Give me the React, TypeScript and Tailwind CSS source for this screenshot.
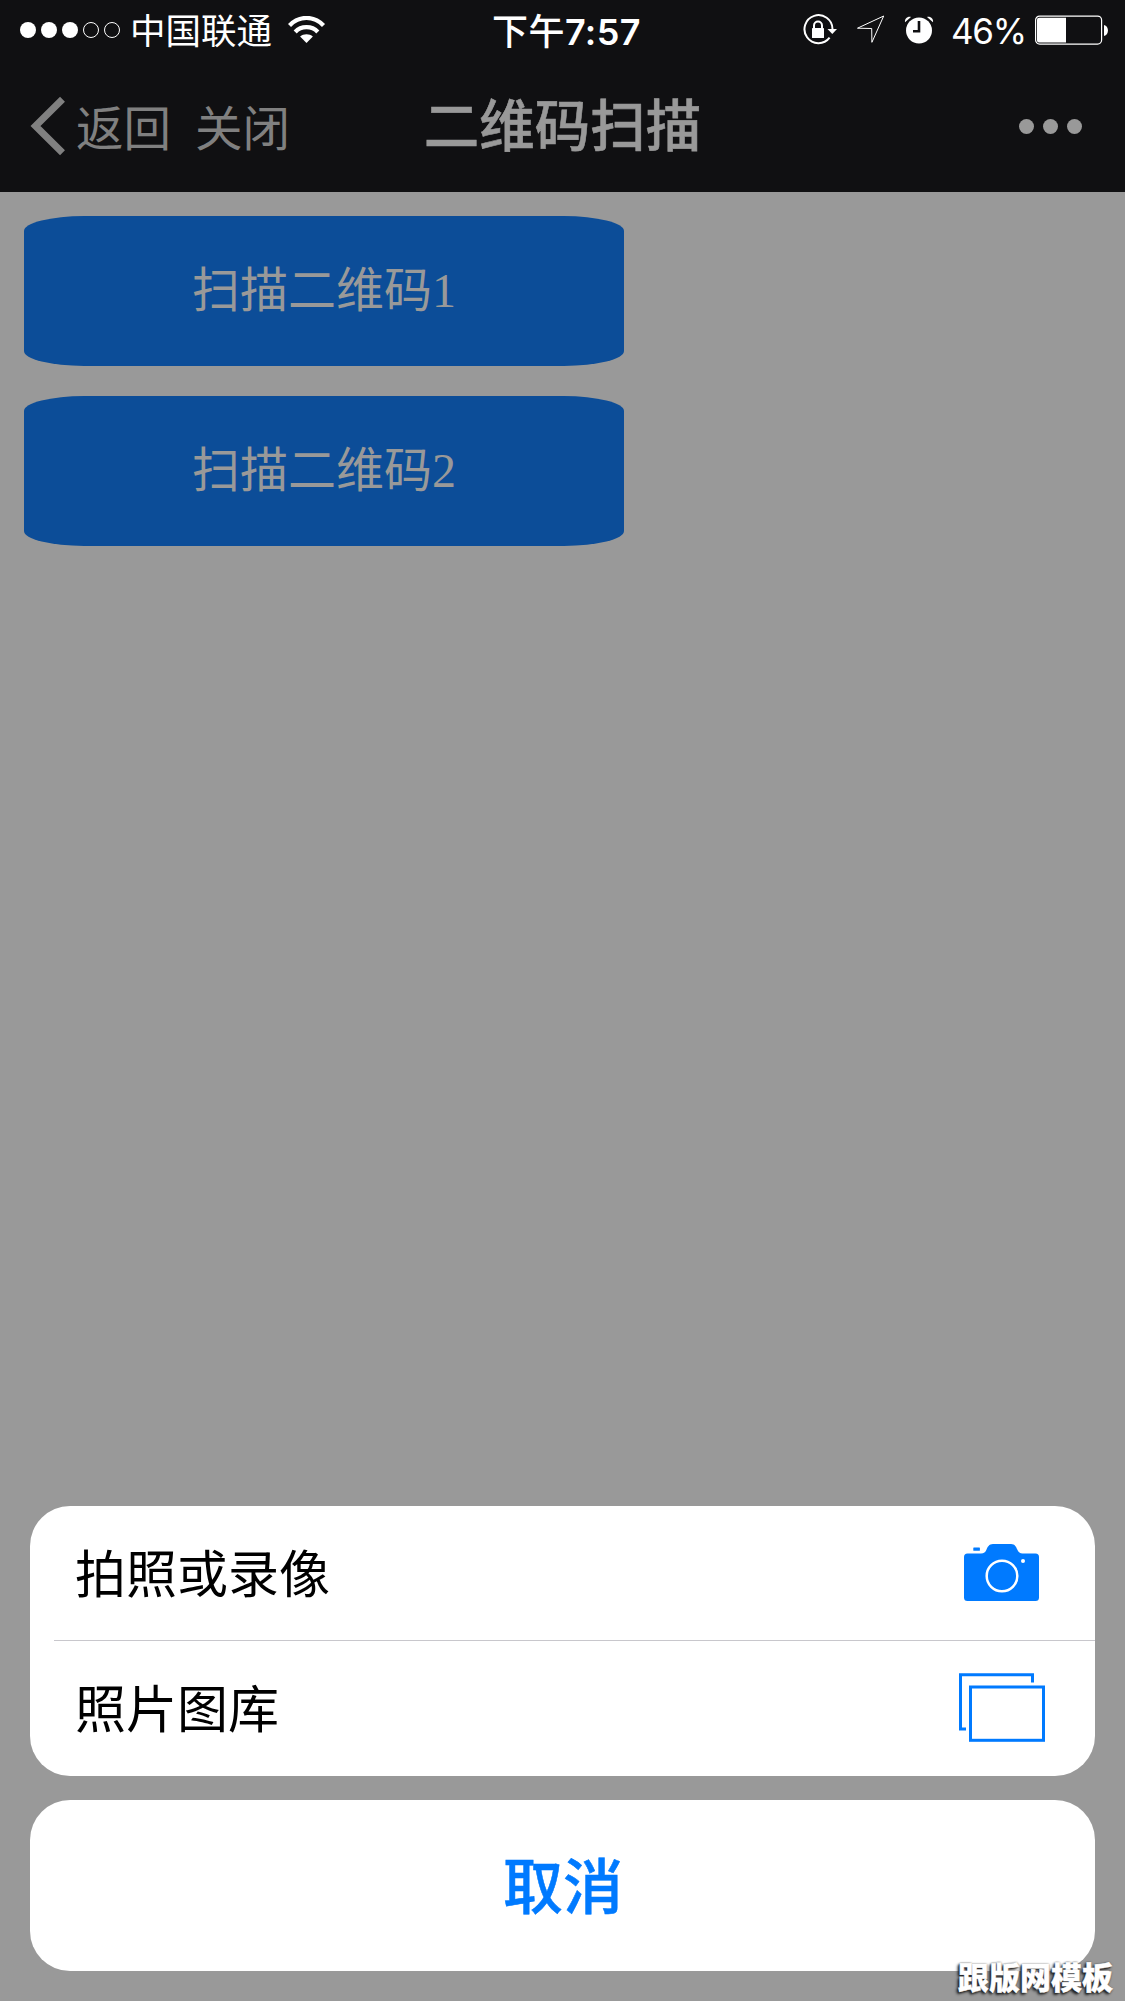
import React from 'react';
import { twMerge } from 'tailwind-merge';

const SANS = "font-['Inter','Noto_Sans_CJK_SC',sans-serif]";
const CJK = "font-['Noto_Sans_CJK_SC',sans-serif]";

const SIGNAL = [true, true, true, false, false];

const WifiIcon = () => (
  <svg className="ml-[16px] h-[28px] w-[38px] shrink-0" viewBox="0 0 38 28" fill="none">
    <path d="M1.500 9.5C11 -0.6 26 -0.6 35.500 9.500" stroke="#fff" strokeWidth="4.200" />
    <path d="M7.200 16C13.100 9.600 23.900 9.600 29.800 16" stroke="#fff" strokeWidth="4.200" />
    <path d="M18.500 27L12.100 20.500C15.500 17.400 21.500 17.400 24.900 20.500Z" fill="#fff" />
  </svg>
);

const RotationLockIcon = () => (
  <svg className="h-[32px] w-[35px] shrink-0" viewBox="0 0 35 32" fill="none">
    <path d="M26.6 23.700A14 14 0 1 1 29.500 15" stroke="#fff" strokeWidth="2" />
    <path d="M24.500 15H34L29.300 20Z" fill="#fff" />
    <rect x="9" y="14" width="12" height="10" rx="0.600" fill="#fff" />
    <path d="M11 14.500V11.500a4 4 0 0 1 8 0V14.500" stroke="#fff" strokeWidth="2" />
  </svg>
);

const LocationIcon = () => (
  <svg className="ml-[17px] h-[32px] w-[31px] shrink-0" viewBox="0 0 31 32" fill="none">
    <path d="M28.700 2L2.500 14.200L16.700 14.500L16.900 28.300Z" stroke="#fff" strokeWidth="1" />
  </svg>
);

const AlarmIcon = () => (
  <svg className="ml-[18px] h-[28px] w-[30px] shrink-0" viewBox="0 0 30 28" fill="none">
    <circle cx="15" cy="14.500" r="13" fill="#fff" />
    <path d="M15 5V15.200H9" stroke="#101012" strokeWidth="2.600" />
    <path d="M1 6.300C0.400 3 3 0.200 7 0.900Z" fill="#fff" />
    <path d="M29 6.300C29.600 3 27 0.200 23 0.900Z" fill="#fff" />
  </svg>
);

const BatteryIcon = () => (
  <svg className="h-[30px] w-[74px] shrink-0" viewBox="0 0 74 30" fill="none">
    <rect x="0.600" y="1.100" width="66" height="28" rx="4" stroke="#fff" strokeWidth="1.200" />
    <path d="M4 2.700H31V27.500H4A2 2 0 0 1 2 25.500V4.700A2 2 0 0 1 4 2.700Z" fill="#fff" />
    <path d="M69 10C74.300 11 74.300 20 69 21Z" fill="#fff" />
  </svg>
);

const CameraIcon = () => (
  <svg className="mr-[26px] h-[57px] w-[75px]" viewBox="0 0 75 57" fill="none">
    <path
      d="M3.500 9.500H17C20 9.500 21.400 8 22.300 6C23.500 3 25 0 29 0H47C51 0 52.200 3 53.500 6C54.500 8 56 9.500 58.500 9.500H71.500Q75 9.500 75 13V53.500Q75 57 71.500 57H3.500Q0 57 0 53.500V13Q0 9.500 3.500 9.500Z"
      fill="#007aff"
    />
    <rect x="9.300" y="3.500" width="6.600" height="3.300" rx="0.500" fill="#007aff" />
    <circle cx="38" cy="32" r="15.300" stroke="#fff" strokeWidth="2.500" />
    <circle cx="59" cy="17" r="2" fill="#fff" />
  </svg>
);

const LibraryIcon = () => (
  <svg className="mr-[20px] h-[69px] w-[86px]" viewBox="0 0 86 69" fill="none" stroke="#007aff" strokeWidth="3">
    <path d="M73.500 9.500V1.700H1.500V56H7" />
    <rect x="11.500" y="14" width="73" height="53.300" />
  </svg>
);

const StatusBar = () => (
  <div
    className={twMerge(
      'grid h-[60px] grid-cols-[1fr_auto_1fr] items-center whitespace-nowrap text-[36px] leading-none text-white',
      SANS
    )}
  >
    <div className="flex items-center pl-[20px]">
      <div className="flex gap-[5px]">
        {SIGNAL.map((on, i) => (
          <span key={i} className={on ? 'size-[16px] rounded-full bg-white' : 'size-[16px] rounded-full border border-white'} />
        ))}
      </div>
      <span className="ml-[10px] pt-[3px] text-[35.5px]">中国联通</span>
      <WifiIcon />
    </div>
    <div className="pt-[3px] pl-[8px] font-medium tracking-[0.4px]">
      下午<span className="font-semibold">7:57</span>
    </div>
    <div className="flex items-center justify-end pr-[16px]">
      <RotationLockIcon />
      <LocationIcon />
      <AlarmIcon />
      <span className="mr-[9px] ml-[17px] pt-[3px] text-[35px] tracking-[-1.2px]">46%</span>
      <BatteryIcon />
    </div>
  </div>
);

const NavBar = () => (
  <div className={twMerge('grid h-[132px] grid-cols-[1fr_auto_1fr] items-center whitespace-nowrap leading-none', CJK)}>
    <div className="flex items-center text-[47.5px] text-[#808080]">
      <svg className="ml-[30px] h-[60px] w-[36px]" viewBox="0 0 36 60" fill="none">
        <path d="M32.500 3.300L5.500 30L32.500 56.700" stroke="#808080" strokeWidth="7" />
      </svg>
      <span className="ml-[10px]">返回</span>
      <span className="ml-[24px]">关闭</span>
    </div>
    <h1 className="pb-[7px] text-[55.5px] font-medium text-[#999] [-webkit-text-stroke:0.6px_#999]">二维码扫描</h1>
    <div className="flex justify-end gap-[9px] pr-[43px]">
      <span className="size-[15px] rounded-full bg-[#999]" />
      <span className="size-[15px] rounded-full bg-[#999]" />
      <span className="size-[15px] rounded-full bg-[#999]" />
    </div>
  </div>
);

const ScanButton: React.FC<{ label: string }> = ({ label }) => (
  <button className="h-[150px] w-[600px] rounded-[10%] bg-[#0c4d98] pb-px font-['Liberation_Serif','Noto_Sans_CJK_SC',serif] text-[48px] leading-none text-[#999]">
    {label}
  </button>
);

const SheetRow: React.FC<{ label: string; icon: React.ReactNode }> = ({ label, icon }) => (
  <button className="flex items-center justify-between pr-[30px] pl-[21px] text-[51px] leading-none text-black">
    <span className="pb-[2px]">{label}</span>
    {icon}
  </button>
);

export default function App() {
  return (
    <div className="relative flex h-[2001px] w-[1125px] flex-col overflow-hidden bg-[#999]">
      <header className="h-[192px] shrink-0 bg-[#101012]">
        <StatusBar />
        <NavBar />
      </header>

      <main className="flex flex-col items-start gap-[30px] p-6">
        <ScanButton label="扫描二维码1" />
        <ScanButton label="扫描二维码2" />
      </main>

      <div className={twMerge('mx-[30px] mt-auto mb-[30px] flex flex-col gap-6', CJK)}>
        <div className="grid h-[270px] grid-rows-[133px_1px_134px] rounded-[40px] bg-white pl-6">
          <SheetRow label="拍照或录像" icon={<CameraIcon />} />
          <div className="mt-px h-px bg-[#c8c7cc]" />
          <SheetRow label="照片图库" icon={<LibraryIcon />} />
        </div>
        <button className="h-[171px] rounded-[40px] bg-white pb-[5px] pl-px text-[60px] leading-none font-medium text-[#007aff] [-webkit-text-stroke:0.5px_#007aff]">
          取消
        </button>
      </div>

      {/* site watermark over the bottom right corner */}
      <div
        className={twMerge(
          'absolute right-[12px] bottom-[9px] text-[31px] leading-[32px] font-black whitespace-nowrap text-white [-webkit-text-stroke:0.4px_#fff] [text-shadow:-2px_2px_3px_#222,-1px_1px_2px_#333,0_0_2px_#555]',
          CJK
        )}
      >
        跟版网模板
      </div>
    </div>
  );
}
